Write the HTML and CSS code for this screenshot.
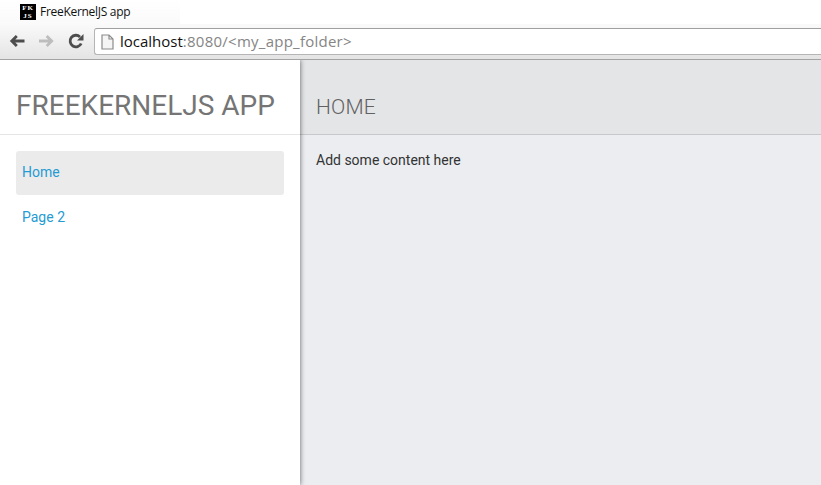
FILE: index.html
```html
<!DOCTYPE html>
<html lang="en">
<head>
<meta charset="utf-8">
<title>FreeKernelJS app</title>
<link rel="stylesheet" href="styles.css">
</head>
<body>
<header class="browser">
  <div class="tabs">
    <div class="tab">
      <span class="favicon"><span>FK</span><span>JS</span></span>
      <span class="tab-title">FreeKernelJS app</span>
    </div>
  </div>
  <div class="toolbar">
    <svg class="icon back" width="16" height="16" viewBox="0 0 16 16"><path d="M15.500 8H3M7.800 3L2.800 8L7.800 13"/></svg>
    <svg class="icon forward" width="16" height="16" viewBox="0 0 16 16"><path d="M0 8H12.500M7.700 3L12.700 8L7.700 13"/></svg>
    <svg class="icon reload" width="16" height="16" viewBox="0 0 16 16"><path d="M13.200 10.500A5.800 5.800 0 1 1 12 3.900"/><path class="tip" d="M15.500 1V7.500H9Z"/></svg>
    <div class="address">
      <svg class="page-icon" width="13" height="16" viewBox="0 0 13 16"><path d="M1 1H8L12 5V15H1ZM8 1V5H12"/></svg>
      <span class="url"><span class="host">localhost</span>:8080/&lt;my_app_folder&gt;</span>
    </div>
  </div>
</header>
<div class="app">
  <aside class="sidebar">
    <h1 class="brand">FREEKERNELJS APP</h1>
    <nav class="menu">
      <a class="item active">Home</a>
      <a class="item">Page 2</a>
    </nav>
  </aside>
  <main class="main">
    <h2 class="heading">HOME</h2>
    <p class="content">Add some content here</p>
  </main>
</div>
</body>
</html>
```
FILE: styles.css
```css
* { box-sizing: border-box; }
body {
  margin: 0;
  height: 485px;
  overflow: hidden;
  display: flex;
  flex-direction: column;
  background: #fff;
  font-family: Roboto, "Liberation Sans", sans-serif;
}
.browser { height: 60px; flex: none; }
.tabs { height: 24px; }
.tab {
  width: 180px;
  height: 24px;
  padding: 0 20px;
  display: flex;
  align-items: center;
  background: linear-gradient(#fff, #fafafa);
}
.favicon {
  width: 16px;
  height: 16px;
  background: #000;
  color: #fff;
  display: flex;
  flex-direction: column;
  align-items: center;
  font: bold 7px/8px "Liberation Serif", serif;
  letter-spacing: 1px;
}
.tab-title {
  margin-left: 4px;
  color: #111;
  font: 12px/16px "Open Sans", sans-serif;
  letter-spacing: -0.29px;
  white-space: nowrap;
}
.toolbar {
  height: 36px;
  padding: 4px 0 4px 9px;
  display: flex;
  align-items: center;
  background: linear-gradient(#fafafa, #e4e4e4);
  border-bottom: 1px solid #a3a3a3;
}
.icon {
  flex: none;
  margin-bottom: 1px;
  fill: none;
  stroke: #4d4d4d;
  stroke-width: 2.8;
}
.forward { stroke: #bdbdbd; margin-left: 14px; }
.reload { margin-left: 13px; }
.tip { fill: #4d4d4d; stroke: none; }
.address {
  flex: 1;
  height: 27px;
  margin-left: 10px;
  padding-left: 6px;
  display: flex;
  align-items: center;
  background: #fff;
  border: 1px solid #b5b5b5;
  border-top-color: #a0a0a0;
  border-right: 0;
  border-radius: 3px 0 0 3px;
}
.page-icon { fill: #f5f5f5; stroke: #8c8c8c; stroke-width: 1.2; }
.url {
  margin: 0 0 2px 6px;
  color: #858585;
  font: 15px/24px "Open Sans", sans-serif;
  letter-spacing: .25px;
  white-space: nowrap;
}
.host { color: #111; letter-spacing: 0; }
.app { flex: 1; display: flex; }
.sidebar {
  width: 300px;
  position: relative;
  background: #fff;
  box-shadow: 0 0 5px rgba(0, 0, 0, .6);
  clip-path: inset(0 -10px 0 0);
}
.brand {
  margin: 0;
  height: 75px;
  padding: 28px 16px 0;
  border-bottom: 1px solid #e5e5e5;
  color: #757575;
  font-size: 28px;
  font-weight: 400;
  line-height: 36px;
  white-space: nowrap;
}
.menu { padding: 16px; }
.item {
  display: block;
  height: 44px;
  margin-bottom: 1px;
  padding: 0 6px;
  border-radius: 3px;
  color: #259bd3;
  font-size: 14px;
  line-height: 43px;
}
.active { background: #ebebeb; }
.main { flex: 1; background: #ebedf1; }
.heading {
  margin: 0;
  height: 75px;
  padding: 33px 16px 0;
  background: #e4e5e7;
  border-bottom: 1px solid #c7c8ca;
  color: #616161;
  font-size: 21px;
  font-weight: 300;
  letter-spacing: .2px;
  line-height: 28px;
}
.content {
  margin: 0;
  padding: 15px 16px;
  color: #333;
  font-size: 14px;
  line-height: 20px;
}
```
